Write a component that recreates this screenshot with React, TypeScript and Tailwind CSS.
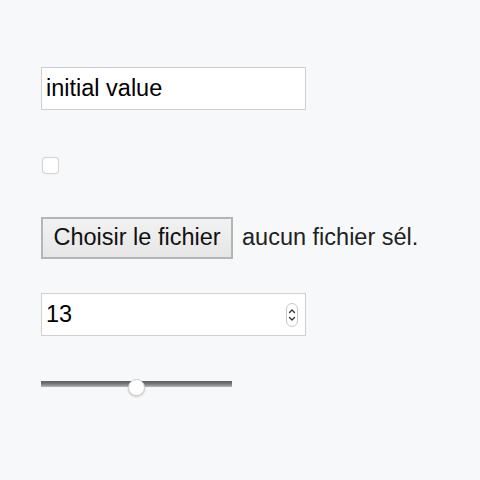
import React from 'react';

const font = { fontFamily: '"Liberation Sans", Arial, sans-serif' };

export default function App() {
  return (
    <div className="h-[480px] w-[480px] bg-[#f7f8fa] pl-[41px] pt-[67px] text-black" style={font}>
      {/* text input */}
      <div className="flex h-[43px] w-[265px] items-center border border-[#cfcfcf] bg-white pl-[4px] pt-[1px] text-[23.5px]">
        initial value
      </div>

      {/* checkbox */}
      <div className="ml-[1px] mt-[47px] h-[17px] w-[17px] rounded-[4px] border border-[#d4d4d4] bg-white shadow-[0_0_1px_rgba(0,0,0,0.15)]" />

      {/* file input */}
      <div className="mt-[43px] flex items-center gap-[9px] text-[23.5px]">
        <div className="flex h-[42px] w-[192px] items-center justify-center border-2 border-[#b5b5b5] bg-gradient-to-b from-[#f2f2f2] to-[#e6e6e6] text-[#111]">
          Choisir le fichier
        </div>
        <span className="text-[#222]">aucun fichier sél.</span>
      </div>

      {/* number input */}
      <div className="mt-[34px] flex h-[43px] w-[265px] items-center justify-between border border-[#cfcfcf] bg-white pl-[4px] pr-[7px] pt-[1px] text-[23.5px]">
        <span>13</span>
        <div className="flex h-[24px] w-[12px] flex-col items-center justify-center rounded-full border border-[#c8c8c8] bg-white">
          <svg width="8" height="18" viewBox="0 0 8 18" fill="none" stroke="#333" strokeWidth="1.3" strokeLinecap="round" strokeLinejoin="round">
            <path d="M1.5 6.5 L4 4 L6.5 6.5" />
            <path d="M1.5 11.5 L4 14 L6.5 11.5" />
          </svg>
        </div>
      </div>

      {/* range */}
      <div className="relative mt-[44px] h-[16px] w-[191px]">
        <div className="absolute left-0 right-0 top-[1px] h-[6px] bg-gradient-to-b from-[#5e5e5e] via-[#7a7a7a] to-[#b9b9b9]" />
        <div className="absolute left-[87px] top-[-1px] h-[17px] w-[17px] rounded-full border border-[#d0d0d0] bg-white shadow-[0_1px_2px_rgba(0,0,0,0.2)]" />
      </div>
    </div>
  );
}
